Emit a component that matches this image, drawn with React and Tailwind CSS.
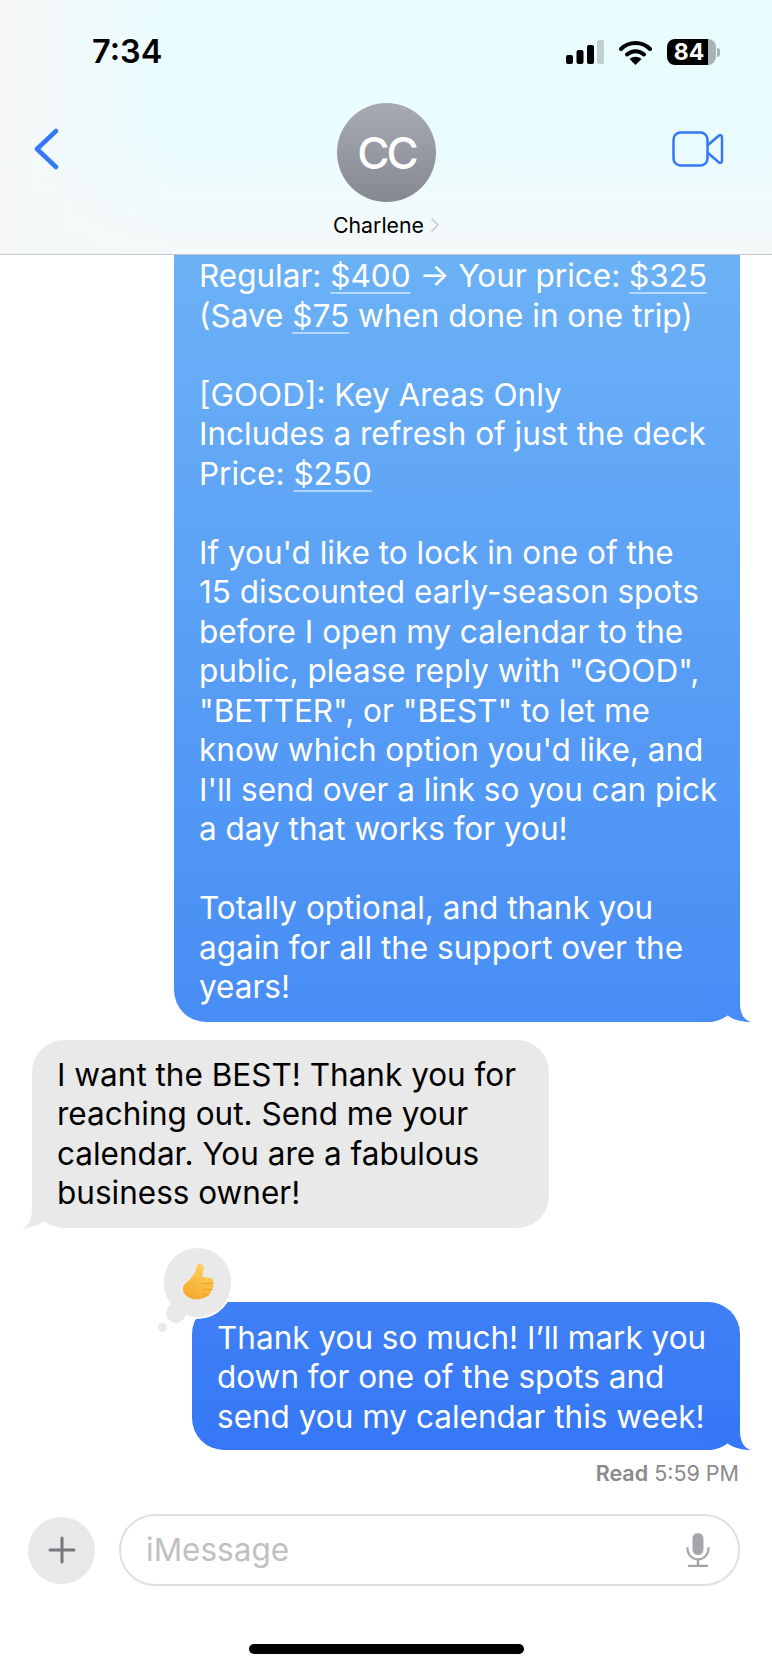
import React from 'react';

const FONT = "font-['Inter','Liberation_Sans',sans-serif]";

function Money({ children }) {
  return (
    <span className="underline decoration-white/50 decoration-[1.5px] underline-offset-[5px] [text-decoration-skip-ink:none]">
      {children}
    </span>
  );
}

// little curl at the bottom corner of a bubble
function Tail({ side, color }) {
  if (side === 'right') {
    return (
      <svg className="absolute right-[-12px] bottom-0" width="52" height="36" viewBox="0 0 52 36">
        <path d="M0 36 L8 36 C16 36 22 33 27 29 C32 33 40 36 51 36 C44 34 40 28 40 16 L40 0 L0 0 Z" fill={color} />
      </svg>
    );
  }
  return (
    <svg className="absolute left-[-10px] bottom-0" width="52" height="36" viewBox="0 0 52 36">
      <path d="M52 36 L44 36 C36 36 30 33 22 29 C17 33 10 36 0 36 C7 34 10 28 10 16 L10 0 L52 0 Z" fill={color} />
    </svg>
  );
}

function ThumbsUp() {
  return (
    <svg width="32" height="36" viewBox="0 0 32 36">
      <defs>
        <linearGradient id="thumb" x1="0.700" y1="0" x2="0.300" y2="1">
          <stop offset="0" stopColor="#fdd05a" />
          <stop offset="1" stopColor="#f6a92c" />
        </linearGradient>
      </defs>
      <path
        d="M18 0 C20.500 0 22 2 21.700 4.500 C21.500 7.500 20 10 20.700 13 L28.500 14 C31 14.500 32 17 31.500 19 C32 21.500 31 24 30 25.500 C29.500 28 28 30 26.500 31 C25 33 22 34.500 19 34.700 C15 35.500 11 35.500 8 34 C4 32.500 1.500 29.500 1 26 C0.500 23 1.500 21 4 19 C8 16 11 12 13 8 C14 5.500 14.500 2 15.500 1 C16 0.300 17 0 18 0 Z"
        fill="url(#thumb)"
      />
      <path d="M21 19.500 C24 20 28 19.500 31 19 M21.500 25 C24 25.500 27 25.500 30 25.500 M20.500 30 C23 31 25 31 26.500 31" stroke="#ea9a2a" strokeWidth="0.900" fill="none" strokeLinecap="round" />
    </svg>
  );
}

function StatusIcons() {
  return (
    <div className="flex items-center">
      <svg width="38" height="24" viewBox="0 0 38 24">
        <rect x="0" y="15" width="7" height="9" rx="2" fill="#000" />
        <rect x="10.500" y="10" width="7" height="14" rx="2" fill="#000" />
        <rect x="21" y="5" width="7" height="19" rx="2" fill="#000" />
        <rect x="31" y="0" width="7" height="24" rx="2" fill="#c3cfd4" />
      </svg>
      <svg className="ml-[15px]" width="33" height="25" viewBox="0 0 33 25">
        <path d="M2 9 C10 1 23 1 31 9" stroke="#000" strokeWidth="4" fill="none" strokeLinecap="round" />
        <path d="M8 14.500 C13 10 20 10 25 14.500" stroke="#000" strokeWidth="4" fill="none" strokeLinecap="round" />
        <path d="M16.500 25 L10.500 19 C14 16 19 16 22.500 19 Z" fill="#000" />
      </svg>
      <div className="ml-[15px] flex items-center">
        <div className="flex h-[26px] w-[49px] items-center justify-center rounded-[8px] bg-[linear-gradient(to_right,#000_0%,#000_84%,#a9b3b8_84%,#a9b3b8_100%)] pr-[5px] text-[23px] font-bold text-white">
          84
        </div>
        <div className="ml-[1px] h-[9px] w-[3px] rounded-r-full bg-[#a9b3b8]" />
      </div>
    </div>
  );
}

export default function App() {
  return (
    <div className={`flex h-[1670px] w-[772px] flex-col overflow-hidden bg-white ${FONT}`}>
      {/* header */}
      <div className="h-[255px] shrink-0 border-b border-[#c4c8ca] bg-[linear-gradient(to_bottom,transparent_50%,#f6f8f8e0_100%),linear-gradient(95deg,#f7f7f7_0%,#e9fdff_24%,#e9fdff_100%)]">
        <div className="flex items-center justify-between pl-[92px] pr-[52px] pt-[32px]">
          <span className="text-[32.5px] font-semibold leading-[40px] text-black">7:34</span>
          <StatusIcons />
        </div>
        <div className="grid grid-cols-[1fr_auto_1fr] pt-[31px]">
          <div className="pl-[33px] pt-[25px]">
            <svg width="26" height="42" viewBox="0 0 26 42">
              <path d="M23 3 L4 21 L23 39" stroke="#3478f6" strokeWidth="4.500" fill="none" strokeLinecap="round" strokeLinejoin="round" />
            </svg>
          </div>
          <div className="flex flex-col items-center pl-[1px]">
            <div className="flex h-[99px] w-[99px] items-center justify-center rounded-full bg-gradient-to-b from-[#a8abb4] to-[#858892] text-[44px] font-medium tracking-[-3px] text-white">
              CC
            </div>
            <div className="mt-[10px] flex items-center text-[21.3px] leading-[26px] text-black">
              <span>Charlene</span>
              <svg className="ml-[6px]" width="10" height="16" viewBox="0 0 10 16">
                <path d="M1.500 1.500 L8 8 L1.500 14.500" stroke="#c3c8cc" strokeWidth="1.500" fill="none" />
              </svg>
            </div>
          </div>
          <div className="flex justify-end pr-[48px] pt-[28px]">
            <svg width="52" height="36" viewBox="0 0 52 36">
              <rect x="1.500" y="1.500" width="34" height="33" rx="7" stroke="#3478f6" strokeWidth="2.500" fill="none" />
              <path d="M36 14 L47 4.500 C48.500 3.500 50 4.500 50 6 L50 30 C50 31.500 48.500 32.500 47 31.500 L36 22" stroke="#3478f6" strokeWidth="2.500" fill="none" strokeLinejoin="round" />
            </svg>
          </div>
        </div>
      </div>

      {/* messages, the first bubble runs up under the header */}
      <div className="flex min-h-0 flex-1 flex-col justify-end overflow-hidden text-[31.5px] leading-[39.5px]">
        <div className="relative ml-[174px] mr-[32px] shrink-0 rounded-[32px] bg-[linear-gradient(to_bottom,#6cb2f6_60px,#478df5_100%)] pb-[15px] pl-[25px] pr-[10px] pt-[75px] text-white">
          <Tail side="right" color="#478df5" />
          <p className="relative whitespace-nowrap">
            Regular: <Money>$400</Money> → Your price: <Money>$325</Money>
            <br />
            (Save <Money>$75</Money> when done in one trip)
            <br />
            <br />
            [GOOD]: Key Areas Only
            <br />
            Includes a refresh of just the deck
            <br />
            Price: <Money>$250</Money>
            <br />
            <br />
            If you'd like to lock in one of the
            <br />
            15 discounted early-season spots
            <br />
            before I open my calendar to the
            <br />
            public, please reply with "GOOD",
            <br />
            "BETTER", or "BEST" to let me
            <br />
            know which option you'd like, and
            <br />
            I'll send over a link so you can pick
            <br />
            a day that works for you!
            <br />
            <br />
            Totally optional, and thank you
            <br />
            again for all the support over the
            <br />
            years!
          </p>
        </div>

        <div className="relative ml-[32px] mt-[18px] w-[517px] shrink-0 rounded-[32px] bg-[#e9e9e9] px-[25px] py-[15px] text-black">
          <Tail side="left" color="#e9e9e9" />
          <p className="relative whitespace-nowrap">
            I want the BEST! Thank you for
            <br />
            reaching out. Send me your
            <br />
            calendar. You are a fabulous
            <br />
            business owner!
          </p>
        </div>

        <div className="relative ml-[192px] mr-[32px] mt-[74px] shrink-0 rounded-[32px] bg-gradient-to-b from-[#3f80f6] to-[#3677f6] pb-[14px] pl-[25px] pr-[10px] pt-[16px] text-white">
          <Tail side="right" color="#3677f6" />
          <p className="relative whitespace-nowrap">
            Thank you so much! I’ll mark you
            <br />
            down for one of the spots and
            <br />
            send you my calendar this week!
          </p>

          {/* tapback */}
          <div className="absolute left-[-28px] top-[-54px] flex h-[69px] w-[67px] items-center justify-center rounded-full bg-[#e9e9e9] ring-2 ring-white">
            <ThumbsUp />
          </div>
          <div className="absolute left-[-26px] top-[1px] h-[20px] w-[20px] rounded-full bg-[#e9e9e9]" />
          <div className="absolute left-[-34px] top-[21px] h-[9px] w-[9px] rounded-full bg-[#e9e9e9]" />
        </div>

        <div className="mr-[33px] mt-[10px] h-[26px] shrink-0 text-right text-[21.5px] leading-[26px] text-[#8a8a8e]">
          <span className="font-semibold">Read</span> 5:59 PM
        </div>
      </div>

      {/* input bar */}
      <div className="mt-[28px] flex shrink-0 items-center pl-[28px] pr-[32px]">
        <div className="flex h-[67px] w-[67px] items-center justify-center rounded-full bg-[#e8e8ea]">
          <svg width="28" height="28" viewBox="0 0 28 28">
            <path d="M14 2 L14 26 M2 14 L26 14" stroke="#77777b" strokeWidth="3" strokeLinecap="round" />
          </svg>
        </div>
        <div className="ml-[24px] flex h-[72px] flex-1 items-center justify-between rounded-[36px] border-2 border-[#e0e0e2] pl-[25px] pr-[28px]">
          <span className="text-[31.5px] text-[#c0c0c2]">iMessage</span>
          <svg width="24" height="34" viewBox="0 0 24 34">
            <rect x="6.500" y="0" width="11" height="22" rx="5.500" fill="#a6a6aa" />
            <path d="M1.500 15 C1.500 30 22.500 30 22.500 15" stroke="#a6a6aa" strokeWidth="2.200" fill="none" strokeLinecap="round" />
            <path d="M12 26 L12 32" stroke="#a6a6aa" strokeWidth="2.500" />
            <path d="M3 33 L21 33" stroke="#a6a6aa" strokeWidth="2.500" strokeLinecap="round" />
          </svg>
        </div>
      </div>

      {/* home indicator */}
      <div className="flex shrink-0 justify-center pb-[16px] pt-[58px]">
        <div className="h-[10px] w-[275px] rounded-full bg-black" />
      </div>
    </div>
  );
}
